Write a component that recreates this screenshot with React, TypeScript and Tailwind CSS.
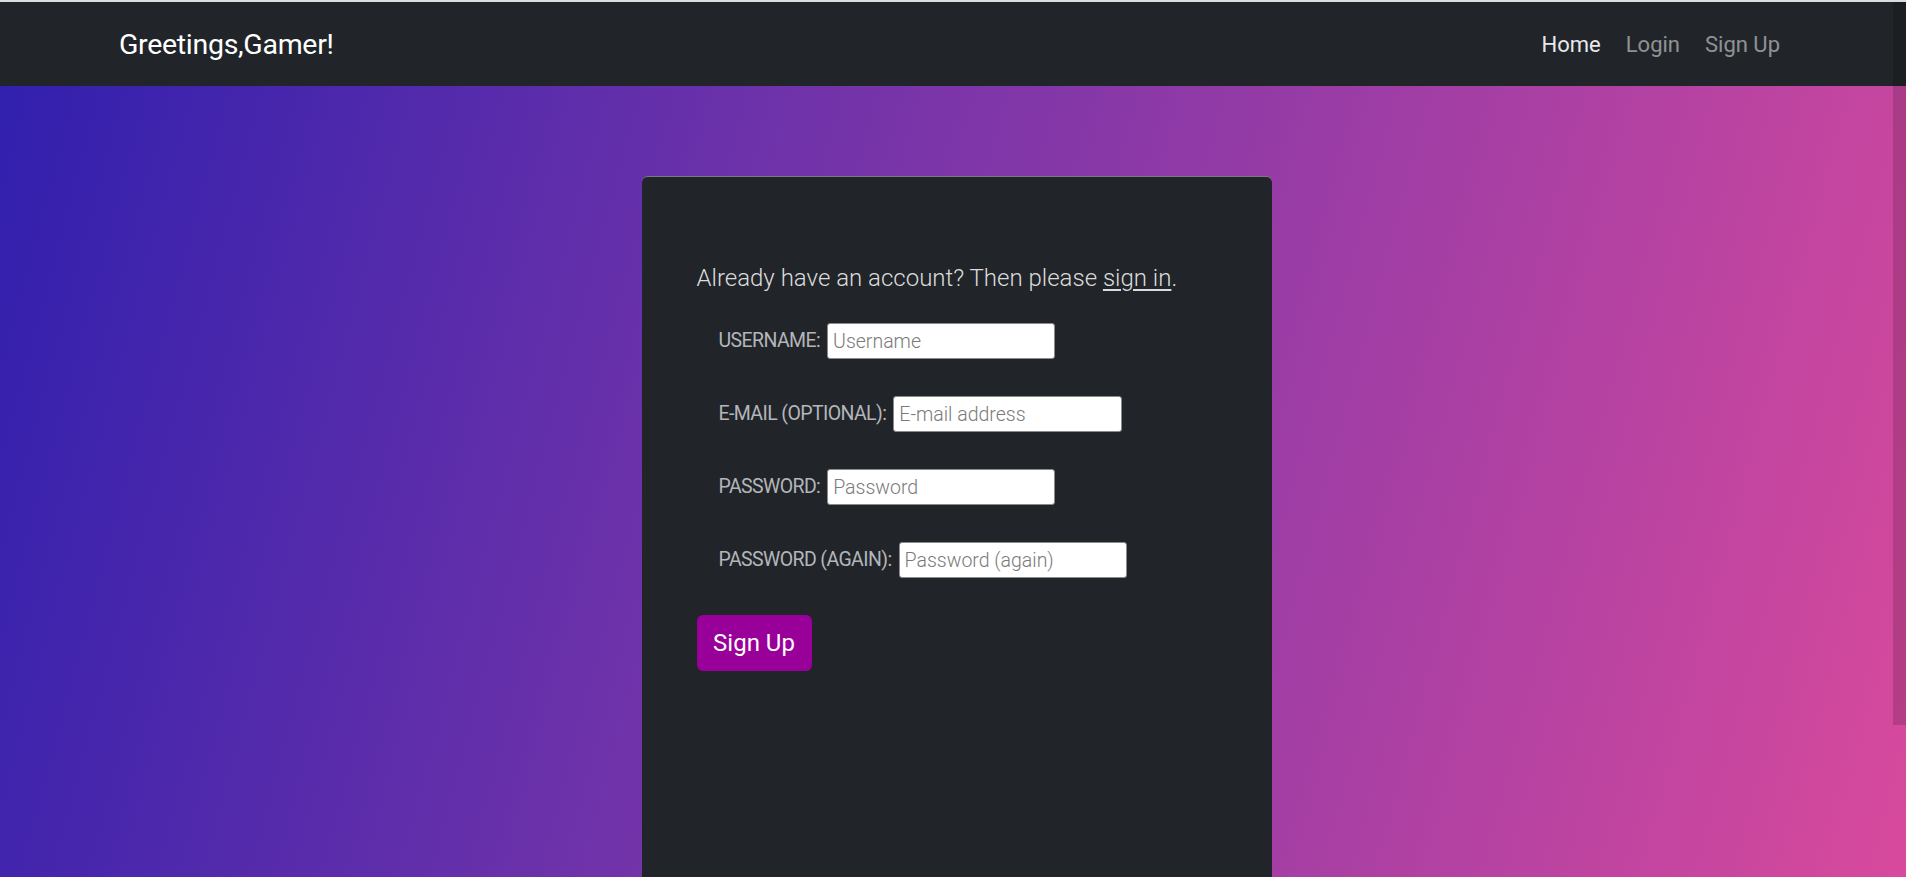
import { useState } from 'react';

const fields = [
  { label: 'Username:', placeholder: 'Username', type: 'text', width: 'w-[228px]' },
  { label: 'E-mail (optional):', placeholder: 'E-mail address', type: 'email', width: 'w-[229px]' },
  { label: 'Password:', placeholder: 'Password', type: 'password', width: 'w-[228px]' },
  { label: 'Password (again):', placeholder: 'Password (again)', type: 'password', width: 'w-[228px]' }
];

function Navbar() {
  return (
    <nav className="h-[84px] bg-[#212529] flex items-center justify-between pl-[119px] pr-[126px]">
      <a href="#" className="text-[28.5px] text-white tracking-[-0.3px] pt-[2px]">
        Greetings,Gamer!
      </a>
      <div className="flex items-center gap-[25px] text-[22px]">
        <a href="#" className="text-white/90">Home</a>
        <a href="#" className="text-white/50">Login</a>
        <a href="#" className="text-white/50">Sign Up</a>
      </div>
    </nav>
  );
}

export default function App() {
  const [values, setValues] = useState<Record<string, string>>({});

  return (
    <div className="relative min-h-screen border-t-2 border-[#dcdcdc] font-['Roboto',sans-serif] bg-[linear-gradient(105deg,#2f1fae_0%,#6a31aa_35%,#a23ea5_68%,#d94a9c_100%)]">
      <Navbar />

      <main className="pt-[90px] flex justify-center">
        <div className="w-[630px] min-h-[760px] ml-[7px] bg-[#212529] rounded-t-[6px] border-t border-white/40 pt-[86px] pl-[55px] pr-10">
          <p className="text-[24px] leading-[30px] font-light text-[#dcdcdc]">
            Already have an account? Then please <a href="#" className="underline underline-offset-[3px]">sign in</a>.
          </p>

          <form className="mt-[30px] flex flex-col gap-[37px]" onSubmit={(e) => e.preventDefault()}>
            {fields.map((f) => (
              <div key={f.label} className="flex items-center pl-[22px] gap-[7px]">
                <label className="uppercase text-[19.5px] text-[#b3b6ba] tracking-[-0.6px]">{f.label}</label>
                <input
                  type={f.type}
                  placeholder={f.placeholder}
                  value={values[f.label] || ''}
                  onChange={(e) => setValues({ ...values, [f.label]: e.target.value })}
                  className={`${f.width} h-[36px] bg-white border border-[#8a8a8a] rounded-[3px] px-[5px] text-[19.5px] font-light text-[#333] placeholder:text-[#7a7a7a] outline-none`}
                />
              </div>
            ))}

            <div>
              <button type="submit" className="w-[115px] h-[56px] rounded-[6px] bg-[#990099] text-white text-[24px]">
                Sign Up
              </button>
            </div>
          </form>
        </div>
      </main>

      {/* scrollbar overlay */}
      <div className="absolute right-0 top-0 w-[13px] h-[723px] bg-black/15" />
    </div>
  );
}
